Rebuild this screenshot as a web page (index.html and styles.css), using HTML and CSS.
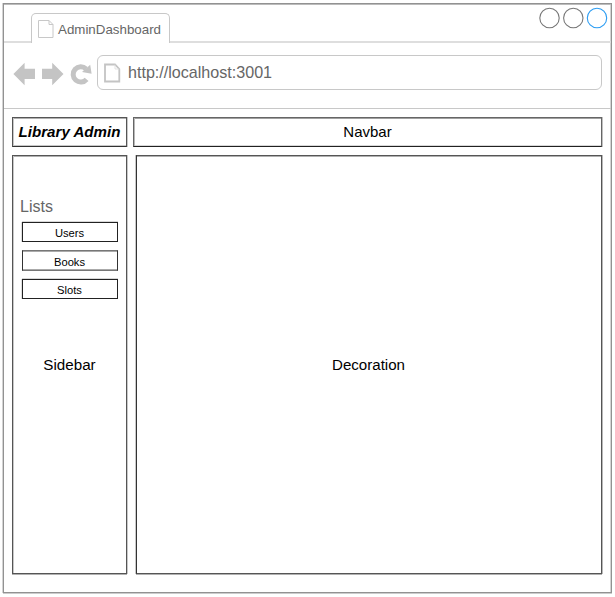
FILE: index.html
```html
<!DOCTYPE html>
<html lang="en">
<head>
<meta charset="utf-8">
<title>AdminDashboard</title>
<link rel="stylesheet" href="styles.css">
</head>
<body>
<div class="window">
  <header class="tabs">
    <div class="tab-lead"></div>
    <div class="tab">
      <svg class="tab-icon" width="16" height="19" viewBox="0 0 16 19"><path d="M.5.5H11L15 4.5V17.5H.5ZM11 .5V4.5H15" fill="none" stroke="#c8c8c8"/></svg>
      <span>AdminDashboard</span>
    </div>
    <div class="tab-rest">
      <svg width="70" height="22" viewBox="0 0 70 22" fill="none" stroke="#777" stroke-width="1.1"><circle cx="11.5" cy="11" r="9.7"/><circle cx="35.3" cy="11" r="9.7"/><circle cx="59" cy="11" r="9.7" stroke="#2b9cf2"/></svg>
    </div>
  </header>
  <div class="toolbar">
    <svg class="nav-icons" width="80" height="24" viewBox="0 0 80 24" fill="#c4c4c4">
      <path d="M.4 12 11.6.7V6.8H22V17H11.6V23.2Z"/>
      <path d="M50.5 12 39.2.7V6.8H29V17H39.2V23.2Z"/>
      <path d="M73.6 17.3A7.6 7.6 0 1 1 73 6.9" fill="none" stroke="#c4c4c4" stroke-width="5"/>
      <path d="M77.2 2.8 78.6 11.7 69 10.1Z"/>
    </svg>
    <div class="address">
      <svg width="17" height="20" viewBox="0 0 17 20"><path d="M1 1.5H11L15.3 6V18.5H1Z" fill="none" stroke="#c4c4c4" stroke-width="1.8"/><path d="M11 1.5V6H15.3" fill="none" stroke="#dcdcdc" stroke-width=".8"/></svg>
      <span>http://localhost:3001</span>
    </div>
  </div>
  <main class="page">
    <div class="panel brand">Library Admin</div>
    <div class="panel navbar">Navbar</div>
    <aside class="panel sidebar">
      <h2>Lists</h2>
      <div class="item">Users</div>
      <div class="item item-soft">Books</div>
      <div class="item">Slots</div>
      <p>Sidebar</p>
    </aside>
    <section class="panel decoration">Decoration</section>
  </main>
</div>
</body>
</html>
```
FILE: styles.css
```css
* { box-sizing: border-box; }
body {
  margin: 0;
  padding: 3px;
  background: #fff;
  font-family: "Liberation Sans", Arial, sans-serif;
  font-size: 15px;
  color: #000;
}
.window {
  width: 609px;
  height: 590px;
  border: 1px solid #929292;
  box-shadow: -1px 0 #d4d4d4, 0 1px #ccc, inset 0 1px #bbb, inset -1px 0 #d4d4d4;
}
.tabs { display: flex; height: 39px; }
.tab-lead { width: 27px; border-bottom: 2px solid #dedede; }
.tab {
  width: 139px;
  height: 30px;
  margin-top: 9px;
  padding: 6px 0 0 6px;
  border: 1px solid #c8c8c8;
  border-bottom: 0;
  border-radius: 5px 5px 0 0;
  display: flex;
  font-size: 13.33px;
  line-height: 20px;
  color: #666;
}
.tab-icon { margin-right: 4px; }
.tab-rest {
  flex: 1;
  border-bottom: 2px solid #dedede;
  padding: 3px 3px 0 0;
  display: flex;
  justify-content: flex-end;
}
.toolbar {
  display: flex;
  height: 66px;
  padding: 12px 9px 0 9px;
  border-bottom: 1px solid #c8c8c8;
}
.nav-icons { margin-top: 7px; flex: none; }
.address {
  flex: 1;
  height: 35px;
  margin-left: 4px;
  padding: 0 0 0 6px;
  border: 1px solid #c8c8c8;
  border-radius: 6px;
  display: flex;
  align-items: center;
  gap: 7px;
  font-size: 16.1px;
  color: #666;
}
.page {
  display: grid;
  grid-template-columns: 115px 1fr;
  grid-template-rows: 30px 419px;
  row-gap: 8px;
  padding: 8px 9px 0 8px;
}
.panel { border: 1px solid #555; }
.brand, .navbar { line-height: 28px; text-align: center; }
.brand {
  font-weight: bold;
  font-style: italic;
  font-size: 15.1px;
  border-bottom-color: #333;
  box-shadow: inset 1px 0 #c8c8c8, inset 0 1px #b0b0b0, 1px 0 #c8c8c8, inset 0 -1px #c8c8c8;
}
.navbar {
  margin-left: 6px;
  border-color: #666;
  border-bottom-color: #222;
  box-shadow: inset 1px 0 #b8b8b8, inset 0 1px #a0a0a0, 1px 0 #c0c0c0, inset 0 -1px #d8d8d8;
}
.sidebar {
  padding: 41px 8px 0 9px;
  text-align: center;
  box-shadow: inset 1px 0 #c8c8c8, inset 0 1px #b0b0b0, 1px 0 #c8c8c8, 0 1px #b0b0b0;
}
.sidebar h2 {
  margin: 0 0 0 -2px;
  font-size: 16px;
  line-height: 20px;
  font-weight: normal;
  text-align: left;
  color: #666;
}
.item {
  height: 20px;
  margin: 5px 0 0;
  padding-right: 1px;
  border: 1px solid #222;
  box-shadow: 0 -1px #d8d8d8, -1px 0 #e0e0e0;
  font-size: 11.2px;
  line-height: 20px;
}
.item + .item { margin-top: 8px; }
.item-soft {
  height: 21px;
  border-color: #777 #333;
  box-shadow: inset 0 1px #aaa, inset 0 -1px #aaa;
  line-height: 22px;
}
.sidebar p { margin: 57px 1px 0 0; line-height: 18px; font-size: 15.2px; }
.decoration {
  margin-left: 9px;
  padding-right: 1px;
  font-size: 15.1px;
  line-height: 418px;
  text-align: center;
  border-left-color: #333;
  box-shadow: -1px 0 #c8c8c8, 1px 0 #b8b8b8, 0 1px #b0b0b0, inset 0 1px #b0b0b0;
}
```
